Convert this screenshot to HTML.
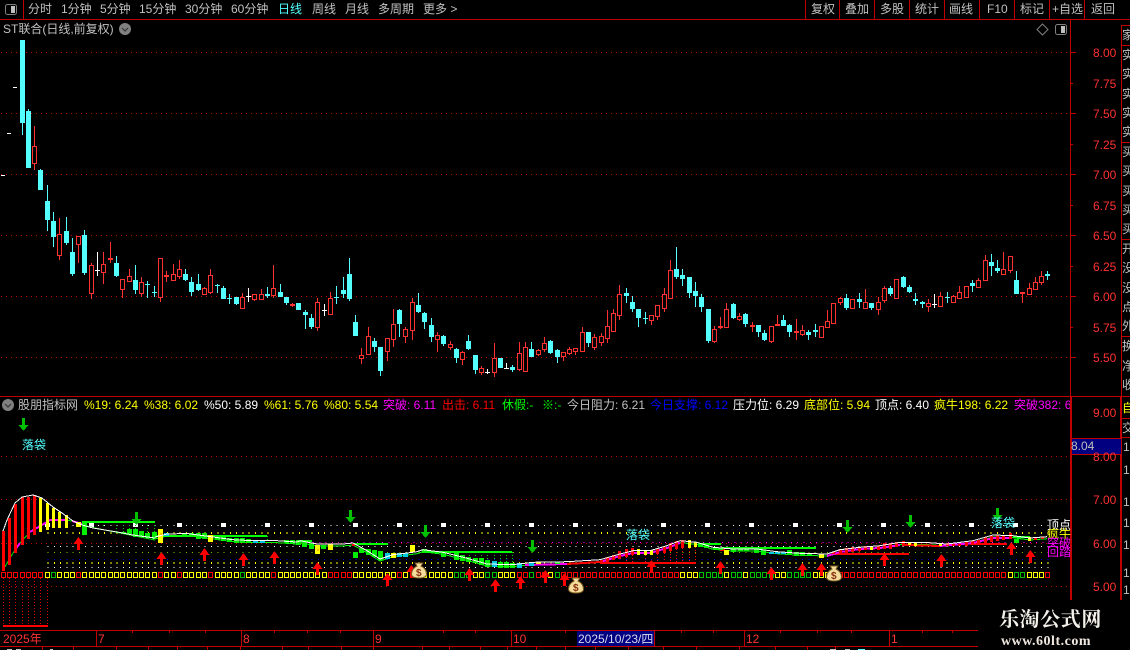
<!DOCTYPE html>
<html lang="zh"><head><meta charset="utf-8"><title>股朋指标网</title>
<style>
html,body{margin:0;padding:0;background:#000;width:1130px;height:650px;overflow:hidden}
svg{display:block;position:absolute;left:0;top:0}
text{font-family:"Liberation Sans","WenQuanYi Zen Hei","Noto Sans CJK SC",sans-serif;font-size:12px;fill:#c0c0c0}
.ax{fill:#ff3232}
.y{fill:#ffff00}.w{fill:#fff}.m{fill:#ff00ff}.r{fill:#ff0000}.g{fill:#00ff00}.b{fill:#0000ff}.c{fill:#54ffff}
path{fill:none}
</style></head><body>
<svg width="1130" height="650" viewBox="0 0 1130 650" xmlns="http://www.w3.org/2000/svg">
<g shape-rendering="crispEdges">
<!-- frame -->
<path stroke="#c00000" d="M0 19.5H1130M23.5 0V19M805.5 0V19M839.5 0V19M874.5 0V19M909.5 0V19M944.5 0V19M979.5 0V19M1014.5 0V19M1049.5 0V19M1084.5 0V19M0 396.5H1130M1070.5 20V396M1121.5 25V600M1121 25.5H1130M1121 45.5H1130M1121 142.5H1130M1121 239.5H1130M1121 336.5H1130M1121 418.5H1130M1121 437.5H1130M1070 52.5H1076M1070 113.5H1076M1070 174.5H1076M1070 235.5H1076M1070 296.5H1076M1070 357.5H1076M1070 83.5H1073M1070 144.5H1073M1070 205.5H1073M1070 266.5H1073M1070 327.5H1073"/>
<path stroke="#c00000" stroke-width="2" d="M1071 396V600M1121 396V600"/>
<!-- grid -->
<path stroke="#c00000" stroke-dasharray="1 4" d="M1 52.5H1068M1 113.5H1068M1 174.5H1068M1 235.5H1068M1 296.5H1068M1 357.5H1068M1 456.5H1068M1 499.5H1068M1 543.5H1068M1 586.5H1068"/>
<!-- time axis -->
<path stroke="#c00000" d="M0 630.5H978M0 646.5H978M96.5 631V646M241.5 631V646M373.5 631V646M511.5 631V646M654.5 631V646M744.5 631V646M889.5 631V646M132.5 630V633M169.5 630V633M205.5 630V633M274.5 630V633M307.5 630V633M340.5 630V633M443.5 630V633M475.5 630V633M565.5 630V633M681.5 630V633M713.5 630V633M780.5 630V633M817.5 630V633M851.5 630V633M922.5 630V633M952.5 630V633M42.5 647V650M73.5 647V650M116.5 647V650M148.5 647V650M177.5 647V650M207.5 647V650M240.5 647V650M282.5 647V650M308.5 647V650M341.5 647V650M373.5 647V650M422.5 647V650M449.5 647V650M480.5 647V650M507.5 647V650M536.5 647V650M565.5 647V650M595.5 647V650M628.5 647V650M663.5 647V650M696.5 647V650M739.5 647V650M775.5 647V650M807.5 647V650M835.5 647V650"/>
<rect x="577" y="631" width="77" height="15" fill="#000080"/>
<rect x="1072" y="438" width="49" height="16" fill="#000080"/>
<path stroke="#c00000" d="M1072 438.5H1121M1072 454.5H1121"/>
<path stroke="#c0c0c0" stroke-width="1" d="M7 649.5H12M16 649.5H21M50 649.5H53M830 649.5H836M845 649.5H850"/>
<path stroke="#54ffff" d="M858 649.5H865"/>
<!-- white ticks -->
<path stroke="#fff" d="M13 87.5H17M7 133.5H11M1 175.5H5"/>
<!-- candles cyan -->
<path stroke="#54ffff" d="M22.5 40V135M28.5 109V168M40.5 169V190M47.5 185V231M53.5 212V247M66.5 217V245M72.5 238V276M84.5 230V275M116.5 256V277M135.5 265V294M147.5 281V298M154.5 286V297M185.5 269V281M191.5 277V296M198.5 274V291M217.5 284V293M223.5 286V299M229.5 294V304M236.5 297V305M267.5 287V298M280.5 284V297M286.5 297V305M298.5 303V310M305.5 310V329M311.5 314V329M336.5 286V304M343.5 277V298M349.5 258V301M355.5 315V336M374.5 338V352M380.5 347V376M399.5 309V337M418.5 293V313M424.5 312V329M431.5 318V342M443.5 335V346M456.5 348V363M468.5 335V350M475.5 355V374M500.5 358V368M512.5 365V372M531.5 342V357M550.5 340V354M557.5 349V363M588.5 332V347M626.5 288V303M632.5 296V312M638.5 309V327M645.5 312V324M676.5 247V279M682.5 269V286M689.5 277V298M695.5 282V307M701.5 294V312M708.5 309V343M733.5 303V319M745.5 313V327M758.5 325V337M764.5 330V341M783.5 315V326M789.5 324V337M808.5 330V340M815.5 324V337M846.5 294V310M859.5 293V308M871.5 303V310M890.5 286V296M903.5 276V288M909.5 285V293M915.5 293V305M922.5 301V308M947.5 292V303M972.5 280V292M991.5 254V276M997.5 260V273M1016.5 271V294M1047.5 271V280"/>
<path stroke="#54ffff" stroke-width="5" d="M22.5 40V123M28.5 111V168M40.5 170V190M47.5 201V220M53.5 221V237M66.5 231V243M72.5 252V274M84.5 235V273M116.5 263V276M135.5 280V290M147.5 284V285M154.5 292V293M185.5 274V280M191.5 282V292M198.5 284V290M217.5 285V286M223.5 288V299M229.5 298V299M236.5 297V304M267.5 294V296M280.5 292V297M286.5 297V303M298.5 303V310M305.5 312V315M311.5 318V327M336.5 297V298M343.5 290V294M349.5 274V299M355.5 322V336M374.5 341V347M380.5 347V371M399.5 310V324M418.5 305V312M424.5 313V322M431.5 325V337M443.5 336V344M456.5 349V358M468.5 341V349M475.5 355V370M500.5 358V368M512.5 367V370M531.5 349V357M550.5 341V353M557.5 350V357M588.5 332V343M626.5 293V296M632.5 302V309M638.5 309V318M645.5 318V319M676.5 269V277M682.5 275V279M689.5 277V293M695.5 291V296M701.5 297V307M708.5 309V341M733.5 304V318M745.5 314V324M758.5 325V332M764.5 333V340M783.5 320V326M789.5 325V332M808.5 332V335M815.5 330V332M846.5 298V308M859.5 299V302M871.5 303V308M890.5 288V294M903.5 277V287M909.5 287V292M915.5 299V301M922.5 302V304M947.5 297V298M972.5 283V286M991.5 262V266M997.5 268V271M1016.5 280V294M1047.5 274V276"/>
<!-- candles white -->
<path stroke="#fff" d="M97.5 252V276M248.5 288V302M324.5 304V316M487.5 369V374M506.5 363V369M934.5 294V308"/>
<path stroke="#fff" stroke-width="5" d="M97.5 270V271M248.5 296V297M324.5 310V311M487.5 372V373M506.5 368V369M934.5 304V305"/>
<!-- candles red wicks -->
<path stroke="#ff3232" d="M34.5 126V170M59.5 218V260M78.5 236V263M91.5 263V299M103.5 252V284M122.5 279V298M129.5 269V281M141.5 277V297M160.5 258V302M173.5 264V281M179.5 260V279M204.5 287V294M210.5 269V294M242.5 293V308M254.5 294V301M261.5 289V299M273.5 265V298M317.5 298V331M330.5 292V314M361.5 348V364M368.5 327V354M387.5 338V361M393.5 309V347M405.5 327V343M412.5 298V340M437.5 332V352M450.5 341V350M462.5 351V365M481.5 366V375M494.5 343V377M519.5 342V371M525.5 342V371M538.5 349V356M544.5 337V352M563.5 352V361M569.5 347V355M575.5 348V355M582.5 327V351M594.5 334V350M601.5 333V346M607.5 310V343M613.5 309V331M619.5 285V320M651.5 315V325M657.5 305V320M664.5 288V312M670.5 260V298M714.5 326V343M726.5 303V327M739.5 313V321M771.5 326V343M802.5 325V336M821.5 326V337M827.5 310V327M833.5 303V323M840.5 297V305M852.5 299V309M865.5 289V308M878.5 297V315M884.5 286V303M896.5 279V298M928.5 299V312M940.5 292V307M953.5 295V302M959.5 286V298M966.5 286V297M978.5 278V287M985.5 255V281M1003.5 252V275M1010.5 256V273M1029.5 283V294M1035.5 277V289M1041.5 271V285M110.5 242V263M166.5 271V282M292.5 303V307M720.5 317V329M752.5 322V332M777.5 315V326M796.5 319V340M1022.5 292V303"/>
<path stroke="#ff3232" stroke-width="5" d="M110.5 258V260M166.5 275V277M292.5 304V306M720.5 326V328M752.5 325V327M777.5 324V326M796.5 331V333M1022.5 292V294"/>
<path stroke="#ff3232" style="fill:#000" d="M32.5 146.5h4V163.5h-4zM57.5 234.5h4V255.5h-4zM76.5 236.5h4V244.5h-4zM89.5 265.5h4V293.5h-4zM101.5 264.5h4V272.5h-4zM120.5 279.5h4V289.5h-4zM127.5 276.5h4V281.5h-4zM139.5 282.5h4V293.5h-4zM158.5 258.5h4V297.5h-4zM171.5 274.5h4V280.5h-4zM177.5 269.5h4V276.5h-4zM202.5 288.5h4V294.5h-4zM208.5 275.5h4V292.5h-4zM240.5 297.5h4V308.5h-4zM252.5 294.5h4V299.5h-4zM259.5 294.5h4V299.5h-4zM271.5 288.5h4V295.5h-4zM315.5 302.5h4V327.5h-4zM328.5 298.5h4V314.5h-4zM359.5 355.5h4V358.5h-4zM366.5 336.5h4V354.5h-4zM385.5 338.5h4V351.5h-4zM391.5 324.5h4V339.5h-4zM403.5 329.5h4V336.5h-4zM410.5 302.5h4V330.5h-4zM435.5 335.5h4V339.5h-4zM448.5 344.5h4V347.5h-4zM460.5 352.5h4V359.5h-4zM479.5 368.5h4V372.5h-4zM492.5 358.5h4V372.5h-4zM517.5 353.5h4V369.5h-4zM523.5 347.5h4V371.5h-4zM536.5 350.5h4V354.5h-4zM542.5 343.5h4V349.5h-4zM561.5 352.5h4V356.5h-4zM567.5 349.5h4V353.5h-4zM573.5 348.5h4V351.5h-4zM580.5 332.5h4V351.5h-4zM592.5 337.5h4V347.5h-4zM599.5 336.5h4V342.5h-4zM605.5 326.5h4V338.5h-4zM611.5 313.5h4V331.5h-4zM617.5 294.5h4V315.5h-4zM649.5 315.5h4V320.5h-4zM655.5 305.5h4V316.5h-4zM662.5 294.5h4V308.5h-4zM668.5 270.5h4V298.5h-4zM712.5 329.5h4V341.5h-4zM724.5 309.5h4V327.5h-4zM737.5 316.5h4V319.5h-4zM769.5 326.5h4V341.5h-4zM800.5 330.5h4V334.5h-4zM819.5 326.5h4V337.5h-4zM825.5 321.5h4V327.5h-4zM831.5 303.5h4V323.5h-4zM838.5 298.5h4V302.5h-4zM850.5 299.5h4V308.5h-4zM863.5 302.5h4V308.5h-4zM876.5 302.5h4V309.5h-4zM882.5 288.5h4V300.5h-4zM894.5 279.5h4V298.5h-4zM926.5 303.5h4V306.5h-4zM938.5 296.5h4V306.5h-4zM951.5 296.5h4V302.5h-4zM957.5 292.5h4V298.5h-4zM964.5 286.5h4V297.5h-4zM976.5 280.5h4V287.5h-4zM983.5 260.5h4V280.5h-4zM1001.5 269.5h4V274.5h-4zM1008.5 256.5h4V270.5h-4zM1027.5 288.5h4V294.5h-4zM1033.5 282.5h4V289.5h-4zM1039.5 276.5h4V282.5h-4z"/>
<!-- indicator dot rows -->
<path stroke="#fff" stroke-dasharray="1 5.2878" d="M47.5 525.5H1049M47.5 546.5H1049M47.5 567.5H1049"/>
<path stroke="#ffff00" stroke-width="2" stroke-dasharray="1 5.2878" d="M47.5 533H1049M47.5 563H1049"/>
<path stroke="#80c000" stroke-dasharray="1 5.2878" d="M47.5 552.5H1049"/>
<path stroke="#0000e0" stroke-dasharray="1 5.2878" d="M47.5 559.5H1049"/>
<path stroke="#ff00ff" stroke-dasharray="1 5.2878" d="M300.5 542.5H1049"/>
<path stroke="#fff" stroke-width="4" stroke-dasharray="5 39" d="M45 525H1025"/>
<!-- red drops -->
<path stroke="#e00000" stroke-dasharray="1 2" d="M3.5 578V625M9.5 578V625M15.5 578V625M22.5 578V625M28.5 578V625M34.5 578V625M40.5 578V625M47.5 578V625"/>
<path stroke="#ff0000" stroke-width="2" d="M3 626H48"/>
<path stroke="#ff0000" stroke-dasharray="1 2" d="M626.5 557V562M632.5 555V562M645.5 555V562M657.5 554V562M664.5 553V562M670.5 551V562M676.5 549V562M682.5 548V562M689.5 548V562M695.5 547V562M840.5 553V554M859.5 551V554"/>
<path stroke="#00e000" stroke-dasharray="1 2" d="M103.5 522V528M116.5 522V532M123.5 522V532M129.5 522V530M135.5 522V529M147.5 522V533M154.5 522V532M437.5 552V553M443.5 552V553M450.5 552V556M456.5 552V553M462.5 552V556M469.5 552V557M475.5 552V558M481.5 552V558M487.5 552V560M494.5 552V561M500.5 552V562M506.5 552V562M512.5 552V563M267.5 536V541"/>
<!-- plateaus -->
<path stroke="#00ff00" stroke-width="2" d="M82 522H155M157 536H210M210 536H267M300 541H312M353 544H388M423 552H512M700 544H721M721 548H816M1013 537H1030"/>
<path stroke="#ff0000" stroke-width="2" d="M600 563H696M833 554H880M880 554H909M970 544H1007"/>
<!-- under-curves -->
<path stroke="#00e000" d="M3 570L13 553L20 543L30 532L42 525L50 520L67 520L80 523L90 527L110 531L155 540"/>
<path stroke="#00ff00" d="M155 539L167 536L187 535.500L213 539L233 541.700L253 542.700L277 542.700L297 544L300 542.700L317 546L343 546L353 545L367 552.700L380 561L393 556.700L407 555L417 553.700L423 551.700L443 554.300L467 560.300L487 566L513 566.700L533 564.300L567 563.700L600 561.700L620 556L633 552.700L650 552.700L667 547.700L680 542.700L697 544.300L713 549.300L733 551L757 551L777 553.700L800 555.300L827 556L840 551.700L860 549.300L880 547.700L900 544.300L923 544.300L947 546L973 542.700L993 537L1013 537.700L1030 540L1047 538.700"/>
<path stroke="#ff00ff" stroke-width="2" d="M15 550L20 543M30 532L42 525L50 520L67 520M72 521L82 524M600 562L620 556L633 553L650 553L667 548L680 543M827 556L840 552L860 549L880 548L900 545M940 546L973 543L993 538L1010 538M525 565L567 564"/>
<path stroke="#ff0000" stroke-width="2" d="M567 564L600 562M905 545L940 546M720 550L725 550"/>
<!-- first rise bars -->
<path stroke="#ff0000" stroke-width="3" d="M3.500 531V571M9.500 518V565M15.500 504V553M22.500 497V545M28.500 497V539M34.500 495V535"/>
<path stroke="#ffff00" stroke-width="3" d="M40.500 498V532M47.500 503V530M53.500 508V528M59.500 512V528M66.500 515V528"/>
<!-- green falling bars -->
<path stroke="#00ee00" stroke-width="5" d="M84.500 523V535M123.500 532V533M129.500 529V534M135.500 529V537M141.500 531V537M147.500 533V538M154.500 532V539M184.500 533V537M191.500 533V537M198.500 533V539M204.500 533V539M217.500 536V540M223.500 537V541M229.500 538V542M236.500 538V543M242.500 538V543M248.500 539V543M286.500 540V543M292.500 540V544M298.500 540V545M304.500 542V547M311.500 543V549M323.500 545V549M355.500 552V558M361.500 548V553M368.500 549V555M374.500 550V557M380.500 551V560M424.500 549V553M443.500 552V557M456.500 553V560M462.500 555V561M468.500 557V562M475.500 558V563M481.500 558V565M487.500 560V567M500.500 562V568M506.500 562V568M512.500 563V568M557.500 562V564M700.500 543V547M706.500 544V548M715.500 547V550M720.500 548V550M733.500 547V552M740.500 548V551M746.500 548V551M756.500 548V553M763.500 550V555M789.500 550V555M796.500 552V556M802.500 552V556M809.500 553V555M1016.500 539V543"/>
<path stroke="#00c8e0" stroke-width="5" d="M166.500 533V536M255.500 540V543M262.500 540V543M387.500 553V559M399.500 553V557M405.500 553V557M494.500 561V567M519.500 563V568M531.500 563V566M771.500 552V554M777.500 552V554M783.500 552V554"/>
<path stroke="#ffff00" stroke-width="5" d="M78.500 522V527M160.500 529V543M210.500 535V542M317.500 545V554M330.500 544V550M393.500 553V558M412.500 545V552M726.500 550V555M821.500 554V558M538.500 562V564"/>
<path stroke="#ff0000" d="M160.500 534H161.500M317.500 550H318.500"/>
<!-- rise bars -->
<path stroke="#ff0000" stroke-width="3" d="M601.500 560V564M607.500 557V562M613.500 555V560M619.500 551V559M626.500 549V557M632.500 548V555M657.500 549V554M664.500 547V553M670.500 543V551M676.500 541V549M682.500 540V548M833.500 552V554M840.500 549V553M846.500 548V553M852.500 547V552M859.500 547V551M865.500 546V550M878.500 546V550M884.500 543V549M890.500 543V549M896.500 542V547M903.500 541V546M947.500 543V546M953.500 544V546M959.500 544V546M966.500 542V546M972.500 541V545M978.500 540V544M985.500 537V543M991.500 536V542M997.500 535V541M1003.500 535V540M1010.500 533V539M1035.500 538V540M1042.500 537V539M353.500 544V546"/>
<path stroke="#ffff00" stroke-width="3" d="M638.500 549V555M645.500 550V555M651.500 550V555M689.500 540V548M695.500 542V547M871.500 546V550M909.500 542V545M915.500 542V546M940.500 543V546M1029.500 537V541"/>
<!-- white curves -->
<path stroke="#fff" d="M3 531L7 520L15 503L22 497L33 495L42 498L53 507L62 513L73 521L82 525L93 528L117 532L133 535L155 538"/>
<path stroke="#fff" d="M155 537L167 534L187 533.500L213 537L233 539.700L253 540.700L277 540.700L297 542L300 540.700L317 544L343 544L353 543L367 550.700L380 559L393 554.700L407 553L417 551.700L423 549.700L443 552.300L467 558.300L487 564L513 564.700L533 562.300L567 561.700L600 559.700L620 554L633 550.700L650 550.700L667 545.700L680 540.700L697 542.300L713 547.300L733 549L757 549L777 551.700L800 553.300L827 554L840 549.700L860 547.300L880 545.700L900 542.300L923 542.300L947 544L973 540.700L993 535L1013 535.700L1030 538L1047 536.700"/>
<!-- squares -->
<path stroke="#ff0000" d="M1.5 572.5h4v5h-4zM7.5 572.5h4v5h-4zM13.5 572.5h4v5h-4zM20.5 572.5h4v5h-4zM26.5 572.5h4v5h-4zM32.5 572.5h4v5h-4zM38.5 572.5h4v5h-4zM76.5 572.5h4v5h-4zM158.5 572.5h4v5h-4zM177.5 572.5h4v5h-4zM208.5 572.5h4v5h-4zM271.5 572.5h4v5h-4zM328.5 572.5h4v5h-4zM334.5 572.5h4v5h-4zM341.5 572.5h4v5h-4zM347.5 572.5h4v5h-4zM397.5 572.5h4v5h-4zM410.5 572.5h4v5h-4zM517.5 572.5h4v5h-4zM523.5 572.5h4v5h-4zM536.5 572.5h4v5h-4zM542.5 572.5h4v5h-4zM561.5 572.5h4v5h-4zM567.5 572.5h4v5h-4zM573.5 572.5h4v5h-4zM580.5 572.5h4v5h-4zM586.5 572.5h4v5h-4zM592.5 572.5h4v5h-4zM599.5 572.5h4v5h-4zM605.5 572.5h4v5h-4zM611.5 572.5h4v5h-4zM617.5 572.5h4v5h-4zM624.5 572.5h4v5h-4zM630.5 572.5h4v5h-4zM636.5 572.5h4v5h-4zM643.5 572.5h4v5h-4zM649.5 572.5h4v5h-4zM655.5 572.5h4v5h-4zM662.5 572.5h4v5h-4zM668.5 572.5h4v5h-4zM674.5 572.5h4v5h-4zM831.5 572.5h4v5h-4zM838.5 572.5h4v5h-4zM844.5 572.5h4v5h-4zM850.5 572.5h4v5h-4zM857.5 572.5h4v5h-4zM863.5 572.5h4v5h-4zM869.5 572.5h4v5h-4zM876.5 572.5h4v5h-4zM882.5 572.5h4v5h-4zM888.5 572.5h4v5h-4zM894.5 572.5h4v5h-4zM901.5 572.5h4v5h-4zM907.5 572.5h4v5h-4zM913.5 572.5h4v5h-4zM920.5 572.5h4v5h-4zM926.5 572.5h4v5h-4zM932.5 572.5h4v5h-4zM938.5 572.5h4v5h-4zM945.5 572.5h4v5h-4zM951.5 572.5h4v5h-4zM957.5 572.5h4v5h-4zM964.5 572.5h4v5h-4zM970.5 572.5h4v5h-4zM976.5 572.5h4v5h-4zM983.5 572.5h4v5h-4zM989.5 572.5h4v5h-4zM995.5 572.5h4v5h-4zM1001.5 572.5h4v5h-4zM1045.5 572.5h4v5h-4z"/>
<path stroke="#ffff00" d="M45.5 572.5h4v5h-4zM57.5 572.5h4v5h-4zM64.5 572.5h4v5h-4zM70.5 572.5h4v5h-4zM82.5 572.5h4v5h-4zM89.5 572.5h4v5h-4zM95.5 572.5h4v5h-4zM101.5 572.5h4v5h-4zM108.5 572.5h4v5h-4zM114.5 572.5h4v5h-4zM120.5 572.5h4v5h-4zM127.5 572.5h4v5h-4zM133.5 572.5h4v5h-4zM139.5 572.5h4v5h-4zM145.5 572.5h4v5h-4zM152.5 572.5h4v5h-4zM164.5 572.5h4v5h-4zM171.5 572.5h4v5h-4zM183.5 572.5h4v5h-4zM189.5 572.5h4v5h-4zM196.5 572.5h4v5h-4zM202.5 572.5h4v5h-4zM215.5 572.5h4v5h-4zM221.5 572.5h4v5h-4zM227.5 572.5h4v5h-4zM234.5 572.5h4v5h-4zM246.5 572.5h4v5h-4zM252.5 572.5h4v5h-4zM259.5 572.5h4v5h-4zM265.5 572.5h4v5h-4zM278.5 572.5h4v5h-4zM284.5 572.5h4v5h-4zM290.5 572.5h4v5h-4zM296.5 572.5h4v5h-4zM303.5 572.5h4v5h-4zM309.5 572.5h4v5h-4zM315.5 572.5h4v5h-4zM322.5 572.5h4v5h-4zM353.5 572.5h4v5h-4zM359.5 572.5h4v5h-4zM366.5 572.5h4v5h-4zM372.5 572.5h4v5h-4zM378.5 572.5h4v5h-4zM385.5 572.5h4v5h-4zM391.5 572.5h4v5h-4zM403.5 572.5h4v5h-4zM416.5 572.5h4v5h-4zM422.5 572.5h4v5h-4zM429.5 572.5h4v5h-4zM435.5 572.5h4v5h-4zM441.5 572.5h4v5h-4zM448.5 572.5h4v5h-4zM473.5 572.5h4v5h-4zM479.5 572.5h4v5h-4zM498.5 572.5h4v5h-4zM504.5 572.5h4v5h-4zM510.5 572.5h4v5h-4zM548.5 572.5h4v5h-4zM680.5 572.5h4v5h-4zM687.5 572.5h4v5h-4zM693.5 572.5h4v5h-4zM724.5 572.5h4v5h-4zM743.5 572.5h4v5h-4zM775.5 572.5h4v5h-4zM781.5 572.5h4v5h-4zM813.5 572.5h4v5h-4zM819.5 572.5h4v5h-4zM825.5 572.5h4v5h-4zM1008.5 572.5h4v5h-4zM1027.5 572.5h4v5h-4zM1033.5 572.5h4v5h-4zM1039.5 572.5h4v5h-4z"/>
<path stroke="#00c000" d="M51.5 572.5h4v5h-4zM240.5 572.5h4v5h-4zM454.5 572.5h4v5h-4zM460.5 572.5h4v5h-4zM466.5 572.5h4v5h-4zM485.5 572.5h4v5h-4zM492.5 572.5h4v5h-4zM529.5 572.5h4v5h-4zM555.5 572.5h4v5h-4zM699.5 572.5h4v5h-4zM706.5 572.5h4v5h-4zM712.5 572.5h4v5h-4zM718.5 572.5h4v5h-4zM731.5 572.5h4v5h-4zM737.5 572.5h4v5h-4zM750.5 572.5h4v5h-4zM756.5 572.5h4v5h-4zM762.5 572.5h4v5h-4zM769.5 572.5h4v5h-4zM787.5 572.5h4v5h-4zM794.5 572.5h4v5h-4zM800.5 572.5h4v5h-4zM806.5 572.5h4v5h-4zM1014.5 572.5h4v5h-4zM1020.5 572.5h4v5h-4z"/>
<!-- arrows -->
<path style="fill:#ff0000" d="M78.500 537l5 7h-3.500v6h-3v-6h-3.500zM161.500 552l5 7h-3.500v6h-3v-6h-3.500zM204.500 548l5 7h-3.500v6h-3v-6h-3.500zM243.500 553l5 7h-3.500v6h-3v-6h-3.500zM274.500 551l5 7h-3.500v6h-3v-6h-3.500zM317.500 562l5 7h-3.500v6h-3v-6h-3.500zM387.500 573l5 7h-3.500v6h-3v-6h-3.500zM411.500 565l5 7h-3.500v6h-3v-6h-3.500zM469.500 568l5 7h-3.500v6h-3v-6h-3.500zM495.500 579l5 7h-3.500v6h-3v-6h-3.500zM520.500 576l5 7h-3.500v6h-3v-6h-3.500zM545.500 570l5 7h-3.500v6h-3v-6h-3.500zM564.500 573l5 7h-3.500v6h-3v-6h-3.500zM651.500 560l5 7h-3.500v6h-3v-6h-3.500zM720.500 561l5 7h-3.500v6h-3v-6h-3.500zM771.500 567l5 7h-3.500v6h-3v-6h-3.500zM802.500 563l5 7h-3.500v6h-3v-6h-3.500zM821.500 563l5 7h-3.500v6h-3v-6h-3.500zM884.500 553l5 7h-3.500v6h-3v-6h-3.500zM941.500 554l5 7h-3.500v6h-3v-6h-3.500zM1011.500 542l5 7h-3.500v6h-3v-6h-3.500zM1030.500 550l5 7h-3.500v6h-3v-6h-3.500z"/>
<path style="fill:#00c000" d="M22 418h3v7h3.500l-5 6l-5-6h3.500zM135 512h3v7h3.500l-5 6l-5-6h3.500zM349 510h3v7h3.500l-5 6l-5-6h3.500zM424 525h3v7h3.500l-5 6l-5-6h3.500zM531 540h3v7h3.500l-5 6l-5-6h3.500zM846 520h3v7h3.500l-5 6l-5-6h3.500zM909 515h3v7h3.500l-5 6l-5-6h3.500zM996 508h3v7h3.500l-5 6l-5-6h3.500z"/>
</g>
<!-- toolbar icons -->
<rect x="5.5" y="4.5" width="11" height="10" rx="2" fill="none" stroke="#808080"/>
<rect x="11" y="6" width="4" height="7" fill="#c0c0c0"/>
<rect x="1055.5" y="24.5" width="11" height="10" rx="2" fill="none" stroke="#808080"/>
<rect x="1061" y="26" width="4" height="7" fill="#c0c0c0"/>
<path d="M1042.5 24L1048 29.5L1042.5 35L1037 29.5Z" stroke="#808080"/>
<circle cx="125" cy="29" r="6" fill="#808080"/>
<path d="M122 28l3 3l3-3" stroke="#333" stroke-width="1.2"/>
<circle cx="8" cy="405" r="6" fill="#808080"/>
<path d="M5 404l3 3l3-3" stroke="#333" stroke-width="1.2"/>
<!-- money bags -->
<path d="M415 563h8l-2 3c4 2 5.500 5 5.500 8c0 3-3 4-7.500 4s-7.500-1-7.500-4c0-3 1.500-6 5.500-8z" style="fill:#f3dc9c" stroke="#7a5a20"/><text x="416" y="576" style="font-size:10px;font-weight:bold;fill:#8a3010">$</text>
<path d="M572 578h8l-2 3c4 2 5.500 5 5.500 8c0 3-3 4-7.500 4s-7.500-1-7.500-4c0-3 1.500-6 5.500-8z" style="fill:#f3dc9c" stroke="#7a5a20"/><text x="573" y="591" style="font-size:10px;font-weight:bold;fill:#8a3010">$</text>
<path d="M830 566h8l-2 3c4 2 5.500 5 5.500 8c0 3-3 4-7.500 4s-7.500-1-7.500-4c0-3 1.500-6 5.500-8z" style="fill:#f3dc9c" stroke="#7a5a20"/><text x="831" y="579" style="font-size:10px;font-weight:bold;fill:#8a3010">$</text>
<!-- toolbar text -->
<text x="28" y="13">分时</text><text x="61" y="13">1分钟</text><text x="100" y="13">5分钟</text><text x="139" y="13">15分钟</text><text x="185" y="13">30分钟</text><text x="231" y="13">60分钟</text><text x="278" y="13" class="c">日线</text><text x="312" y="13">周线</text><text x="345" y="13">月线</text><text x="378" y="13">多周期</text><text x="423" y="13">更多 &gt;</text>
<text x="811" y="13">复权</text><text x="845" y="13">叠加</text><text x="880" y="13">多股</text><text x="915" y="13">统计</text><text x="949" y="13">画线</text><text x="987" y="13">F10</text><text x="1020" y="13">标记</text><text x="1052" y="13">+自选</text><text x="1091" y="13">返回</text>
<text x="3" y="33">ST联合(日线,前复权)</text>
<!-- axis labels -->
<text x="1093" y="57" class="ax">8.00</text><text x="1093" y="88" class="ax">7.75</text><text x="1093" y="118" class="ax">7.50</text><text x="1093" y="149" class="ax">7.25</text><text x="1093" y="179" class="ax">7.00</text><text x="1093" y="210" class="ax">6.75</text><text x="1093" y="240" class="ax">6.50</text><text x="1093" y="271" class="ax">6.25</text><text x="1093" y="301" class="ax">6.00</text><text x="1093" y="332" class="ax">5.75</text><text x="1093" y="362" class="ax">5.50</text>
<text x="1093" y="417" class="ax">9.00</text><text x="1093" y="461" class="ax">8.00</text><text x="1093" y="504" class="ax">7.00</text><text x="1093" y="548" class="ax">6.00</text><text x="1093" y="591" class="ax">5.00</text>
<text x="1071" y="450">8.04</text>
<!-- right strip -->
<text x="1122" y="39">家</text><text x="1122" y="59">实</text><text x="1122" y="78">实</text><text x="1122" y="98">实</text><text x="1122" y="117">实</text><text x="1122" y="136">实</text><text x="1122" y="156">买</text><text x="1122" y="175">买</text><text x="1122" y="195">买</text><text x="1122" y="214">买</text><text x="1122" y="233">买</text><text x="1122" y="253">开</text><text x="1122" y="272">没</text><text x="1122" y="292">没</text><text x="1122" y="311">点</text><text x="1122" y="330">外</text><text x="1122" y="350">换</text><text x="1122" y="370">净</text><text x="1122" y="389">收</text>
<text x="1122" y="412" class="y">自</text><text x="1122" y="432">交</text>
<text x="1123" y="451">1</text><text x="1123" y="474">1</text><text x="1123" y="506">1</text><text x="1123" y="527">1</text><text x="1123" y="549">1</text><text x="1123" y="577">1</text><text x="1123" y="594">1</text>
<!-- indicator header -->
<text x="18" y="409">股朋指标网</text>
<text x="84" y="409" class="y">%19: 6.24</text><text x="144" y="409" class="y">%38: 6.02</text><text x="204" y="409" class="w">%50: 5.89</text><text x="264" y="409" class="y">%61: 5.76</text><text x="324" y="409" class="y">%80: 5.54</text>
<text x="383" y="409" class="m">突破: 6.11</text><text x="442" y="409" class="r">出击: 6.11</text><text x="502" y="409" class="g">休假:-</text><text x="542" y="409" class="g">※:-</text>
<text x="567" y="409">今日阻力: 6.21</text><text x="650" y="409" class="b">今日支撑: 6.12</text><text x="733" y="409" class="w">压力位: 6.29</text><text x="804" y="409" class="y">底部位: 5.94</text><text x="875" y="409" class="w">顶点: 6.40</text><text x="934" y="409" class="y">疯牛198: 6.22</text>
<svg x="0" y="396" width="1070" height="20"><text x="1014" y="13" class="m">突破382: 6.1</text></svg>
<text x="22" y="449" class="c">落袋</text><text x="626" y="539" class="c">落袋</text><text x="991" y="527" class="c">落袋</text>
<text x="1047" y="529" class="w">顶点</text><text x="1047" y="538" class="y">疯牛</text><text x="1047" y="547" class="m">突破</text><text x="1047" y="556" class="m">回踏</text>
<!-- time labels -->
<text x="3" y="643" class="ax">2025年</text><text x="98" y="643" class="ax">7</text><text x="243" y="643" class="ax">8</text><text x="375" y="643" class="ax">9</text><text x="513" y="643" class="ax">10</text><text x="746" y="643" class="ax">12</text><text x="891" y="643" class="ax">1</text>
<text x="578" y="643" style="fill:#d8d8f0">2025/10/23/四</text>
<!-- watermark -->
<text x="999" y="626" style="font-family:'Noto Serif CJK SC','Liberation Serif',serif;font-size:20px;font-weight:bold;fill:#f4f0ea;letter-spacing:.6px">乐淘公式网</text>
<text x="1001" y="645" style="font-family:'Liberation Serif',serif;font-size:14px;font-weight:bold;fill:#f0e8e0;letter-spacing:.5px">www.60lt.com</text>
</svg>
</body></html>
